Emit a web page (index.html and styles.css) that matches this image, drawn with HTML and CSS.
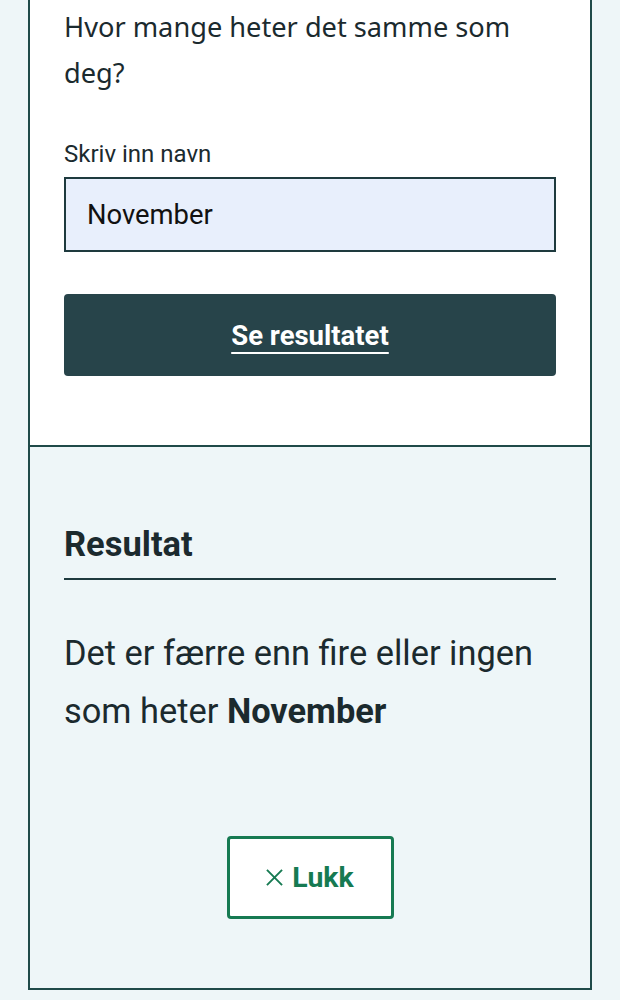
FILE: index.html
```html
<!DOCTYPE html>
<html lang="no">
<head>
<meta charset="utf-8">
<title>Navnestatistikk</title>
<link rel="stylesheet" href="styles.css">
</head>
<body>
<main class="page">
  <section class="card">
    <div class="form-part">
      <h2 class="question">Hvor mange heter det samme som deg?</h2>
      <label class="label" for="navn">Skriv inn navn</label>
      <div class="input">November</div>
      <button class="submit" type="button"><span>Se resultatet</span></button>
    </div>
    <div class="result-part">
      <h3 class="result-title">Resultat</h3>
      <p class="result-text">Det er færre enn fire eller ingen som heter <strong>November</strong></p>
      <div class="close-row">
        <button class="close" type="button">
          <svg class="close-icon" viewBox="0 0 18 18" width="18" height="18" aria-hidden="true"><path d="M1 1 L17 17 M17 1 L1 17" stroke="currentColor" stroke-width="2" fill="none"/></svg>
          <span>Lukk</span>
        </button>
      </div>
    </div>
  </section>
</main>
</body>
</html>
```

FILE: styles.css
```css
html, body {
  margin: 0;
  padding: 0;
  background: #eef6f8;
}
body {
  font-family: Roboto, "Liberation Sans", sans-serif;
  color: #1b2a2e;
}
.page {
  padding: 0 28px 11px 28px;
}
.card {
  border: 2px solid #1f4a49;
  border-top: none;
}
.form-part {
  background: #ffffff;
  padding: 4px 34px 69px 34px;
}
.question {
  margin: 0;
  font-family: "Noto Sans", "Open Sans", sans-serif;
  font-weight: 400;
  font-size: 27.2px;
  line-height: 46px;
  color: #1b2a2e;
}
.label {
  display: block;
  margin-top: 44px;
  font-size: 24px;
  line-height: 28px;
  color: #1b2a2e;
}
.input {
  margin-top: 9px;
  box-sizing: border-box;
  height: 75px;
  border: 2px solid #1e3a3e;
  background: #e8effc;
  padding: 0 21px;
  display: flex;
  align-items: center;
  font-size: 27.4px;
  color: #111;
}
.submit {
  display: flex;
  justify-content: center;
  align-items: center;
  width: 100%;
  height: 82px;
  margin-top: 42px;
  border: none;
  border-radius: 4px;
  background: #27444a;
  color: #fff;
  font-family: Roboto, "Liberation Sans", sans-serif;
  font-weight: 700;
  font-size: 27.5px;
}
.submit span {
  text-decoration: underline;
  text-decoration-thickness: 2px;
  text-underline-offset: 7px;
}
.result-part {
  background: #eef6f8;
  border-top: 2px solid #1f4a49;
  padding: 72px 34px 69px 34px;
}
.result-title {
  margin: 0;
  font-size: 34.5px;
  font-weight: 700;
  line-height: 50px;
  padding-bottom: 9px;
  border-bottom: 2px solid #1e3a3e;
  color: #1b2a2e;
}
.result-text {
  margin: 44px 0 0 0;
  font-size: 34.4px;
  line-height: 58px;
  color: #1b2a2e;
}
.result-text strong {
  font-weight: 700;
}
.close-row {
  display: flex;
  justify-content: center;
  margin-top: 96px;
}
.close {
  display: flex;
  align-items: center;
  gap: 9px;
  box-sizing: border-box;
  width: 167px;
  height: 83px;
  justify-content: center;
  background: #ffffff;
  border: 3px solid #167a52;
  border-radius: 4px;
  color: #167a52;
  font-family: Roboto, "Liberation Sans", sans-serif;
  font-weight: 700;
  font-size: 28.4px;
}
.close-icon {
  width: 17px;
  height: 17px;
}
```
